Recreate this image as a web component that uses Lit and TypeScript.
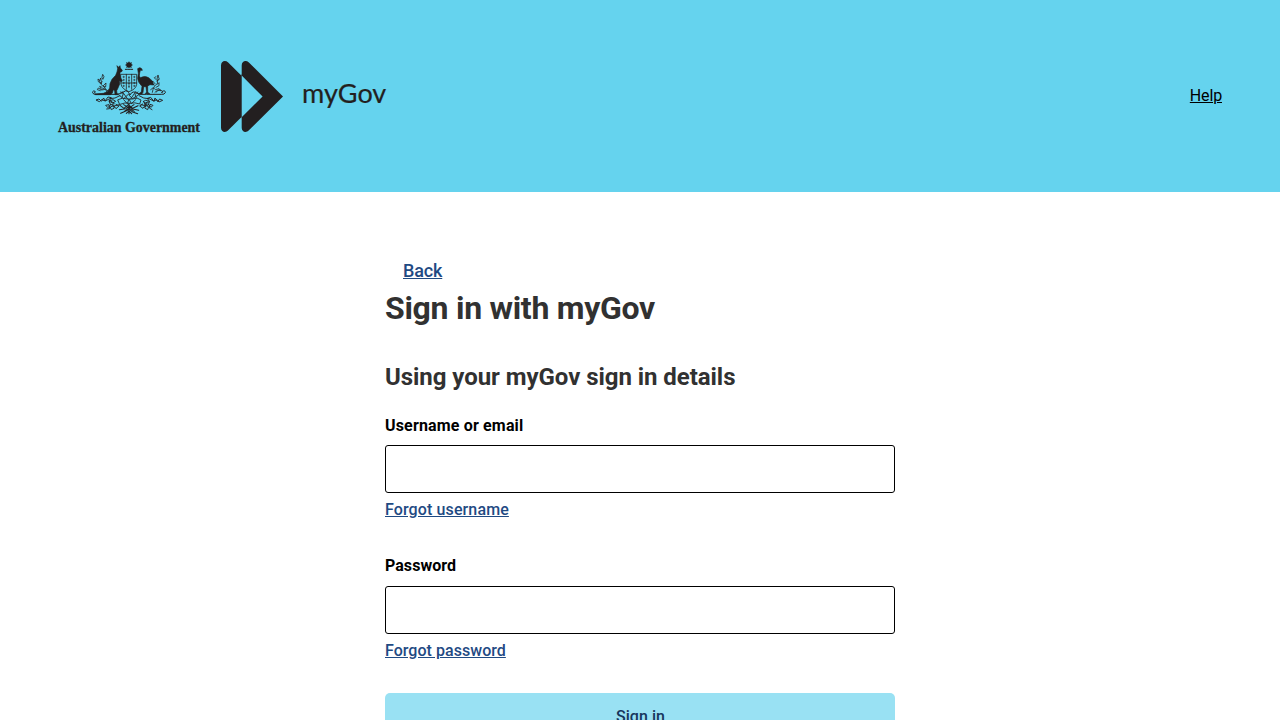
import { LitElement, html, css } from "lit";
import { customElement } from "lit/decorators.js";

@customElement("mygov-logo")
class MygovLogo extends LitElement {
  static styles = css`
    :host { display: block; }
    svg { display: block; }
    .crest-name { font: 700 15px "Liberation Serif", serif; stroke: #231f20; stroke-width: .3px; }
    .brand-name { font: 400 26.5px Lato, sans-serif; stroke: #231f20; stroke-width: .2px; }
    .ink { fill: #231f20; }
    .animal { stroke: #231f20; stroke-width: 2px; stroke-linejoin: round; }
    .line { fill: none; stroke: #231f20; stroke-linecap: round; stroke-linejoin: round; }
  `;
  render() {
    return html`<svg width="350" height="90" viewBox="50 51 350 90" role="img" aria-label="Australian Government, myGov">
      <g transform="translate(50 50) scale(.33333)">
        <path class="ink" d="M237 34l3 4 6-1-2 5 5 3-5 3 1 6-5-2-3 3-3-3-5 2 1-6-5-3 5-3-2-5 6 1z"/>
        <path class="line" stroke-width="3" stroke-dasharray="6 2" d="M226 58h23"/>
        <path class="ink animal" d="M201 47L206 52L210 47L211 54L217 61L215 65L210 67L210 75L212 84L217 92L215 95L208 92L209 102L204 114L200 122L201 131L206 134H195L194 122L190 119L187 129L182 134H136L134 132L160 130L172 125L179 114L180 101L186 88L197 76L201 66L203 56z"/>
        <path class="ink animal" d="M263 56Q270 50 275 56L277 61L271 61L269 69L268 78L271 83Q285 76 296 83L307 93L311 105L300 104L293 108L293 127L299 131H286L290 126L288 110H281L279 127L275 133H264L274 126L276 109Q264 98 263 85L265 70z"/>
        <path class="line" stroke-width="2.4" d="M213 73h47v30q-2 15-23 22-22-8-24-22zM213 99h47M229 73v45M245 73v45"/>
        <path class="line" stroke-width="6" opacity=".65" stroke-dasharray="1 8" d="M221 80v34M237 82v34M253 80v34"/>
        <path class="line" stroke-width="3" d="M137 133h60q15 0 25-8t18 10q8-16 24-4 10 3 25 2h45q10 1 12-5c2-8-12-7-10 0M137 133c-12 1-12-12-3-10q5 4-1 6"/>
        <path class="line" stroke-width="2.4" d="M172 129q-4-17-19-26l3-9M163 115l-9 3-5-9 7 3M160 107l8-8-1 11zM155 100l-7-5 4-11 2 10M156 82l2-9 4 7-3 7zM149 91l-5-4 1 8 7 6M151 122l-9-3 3-5 10 6 12-2 9 6"/>
        <path class="line" stroke-width="2.4" d="M307 127q3-20 16-27l-2-13 3-12 3 11-6 7M313 105l-7-5 2-7 7 8M322 103l5-5v9l-9 5M317 88l-4-5 5-3M323 92l5-4M302 119l8-6 6 6 11-3 6 6-11-1-7 6M319 126l9-8 10 6-3 4"/>
        <path class="line" stroke-width="2.8" d="M210 137q-15 10-31 9l-13 7-11-4-7 6-10-5 9-3 7 7 7-10 4 9 9-12 10 2-7 10 12-4 8 5-9 5-11-6 5 12 11-4-9-7M182 164l-8 9-7-7 10-2 2 12-9 1M188 166l5 8-9 5-3-8 10-4M198 163l9 5-9 8-6-8 12-3"/>
        <path class="line" stroke-width="2.8" d="M267 137q14 10 30 9l14 7 10-4 6 7 11-5-9-4-6 8-8-11-3 10-10-12-10 3 6 9-11-3-8 4 10 6 10-7-5 12-12-4 10-6M295 163l8 9 6-6-9-3-2 11 8 5M289 165l-5 9 9 5 3-9-10-4M278 162l-9 6 10 7 6-8-12-3"/>
        <path class="line" stroke-width="2.6" d="M204 149q12-8 28-2h16q14-7 25 3l-4 12q-15-6-29-2-15-4-30 3zM209 137l12 9 14-13 12 13 17-10M217 125l16 22M257 125l-15 22M211 126l9 5-4 11M264 126l-9 7 4 11M221 149l11 12 5-14 7 14 13-12"/>
        <path class="line" stroke-width="3.2" d="M207 164l15 11 13-11 13 11 16-8M221 164l32 20M252 164l-29 20M208 179l20-3 10-8 10 9 18 4M212 190l14-6 12-6 10 8 15 5M237 160v31M229 190l8-7 8 8"/>
      </g>
      <text class="ink crest-name" x="58" y="132" textLength="142" lengthAdjust="spacingAndGlyphs">Australian Government</text>
      <path class="ink" d="M221 65.5c0-4.3 4-5.8 7.2-3L241.3 75.6V117.2L228.2 130.3c-3.2 3.2-7.2 1.3-7.2-2.6z"/>
      <path class="ink" d="M241.7 65.5c0-4.3 4-5.8 7.2-3L283 96.5L248.9 130.3c-3.2 3.2-7.2 1.3-7.2-2.6V117.2L262.6 96.5L241.7 75.6z"/>
      <path class="line" stroke-width=".6" d="M241.5 75v42"/>
      <text class="ink brand-name" x="302" y="102.8" textLength="84.3" lengthAdjust="spacingAndGlyphs">myGov</text>
    </svg>`;
  }
}

@customElement("app-root")
class AppRoot extends LitElement {
  static styles = css`
    :host { display: block; height: 720px; overflow: hidden; background: #fff; color: #000; font: 400 16px/24px Roboto, sans-serif; }
    header { height: 192px; padding: 0 58px 0 50px; box-sizing: border-box; background: #65d3ee; display: flex; align-items: center; justify-content: space-between; }
    .help { color: #000; letter-spacing: -.15px; }
    main { width: 510px; margin: 0 auto; padding-top: 67px; display: flex; flex-direction: column; align-items: flex-start; }
    .link { color: #1f4a83; font-weight: 500; letter-spacing: .12px; }
    .back { font-size: 18px; margin-left: 18px; letter-spacing: -.15px; }
    h1 { margin: 5px 0 0; font-size: 32px; line-height: 40px; color: #313131; letter-spacing: -.28px; }
    h2 { margin: 33px 0 0; font-size: 24px; line-height: 32px; color: #313131; letter-spacing: -.05px; }
    .field { width: 100%; display: flex; flex-direction: column; align-items: flex-start; margin-top: 21px; }
    .field + .field { margin-top: 32px; }
    .field + .field .link, .field + .field label { letter-spacing: .04px; }
    label { font-weight: 700; letter-spacing: .16px; }
    input { width: 100%; height: 48px; box-sizing: border-box; border: 1px solid #000; border-radius: 3px; margin: 8px 0 5px; padding: 0 12px; background: #fff; font: inherit; }
    .field:first-of-type input { margin-top: 7px; }
    button { width: 100%; height: 48px; margin-top: 30px; padding: 0 0 0 1px; border: 0; border-radius: 5px; background: #99e1f3; color: #17365c; font: 500 16px/24px Roboto, sans-serif; letter-spacing: .05px; }
  `;
  render() {
    return html`
      <header>
        <mygov-logo></mygov-logo>
        <a class="help" href="#">Help</a>
      </header>
      <main>
        <a class="link back" href="#">Back</a>
        <h1>Sign in with myGov</h1>
        <h2>Using your myGov sign in details</h2>
        <div class="field">
          <label for="username">Username or email</label>
          <input id="username" type="text" />
          <a class="link" href="#">Forgot username</a>
        </div>
        <div class="field">
          <label for="password">Password</label>
          <input id="password" type="password" />
          <a class="link" href="#">Forgot password</a>
        </div>
        <button type="button">Sign in</button>
      </main>
    `;
  }
}
